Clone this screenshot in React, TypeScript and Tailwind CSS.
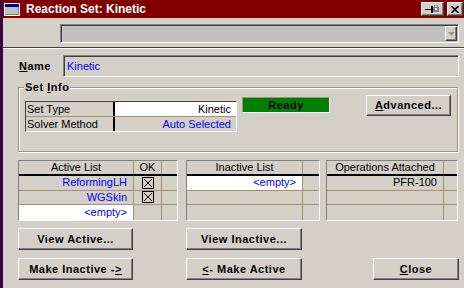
import type { ReactNode } from 'react';

const raised =
  'border border-t-white border-l-white border-b-[#404040] border-r-[#404040] shadow-[inset_-1px_-1px_0_#808080] bg-[#d4d0c8]';
const sunken =
  'border border-t-[#808080] border-l-[#808080] border-b-white border-r-white shadow-[inset_1px_1px_0_#404040]';

function Btn({ children, className }: { children: ReactNode; className: string }) {
  return (
    <div className={`${raised} ${className} flex items-center justify-center font-bold tracking-[0.5px] text-black`}>
      {children}
    </div>
  );
}

function Check() {
  return (
    <svg width="12" height="12" viewBox="0 0 12 12" className="block">
      <rect x="0.5" y="0.5" width="11" height="11" fill="none" stroke="#000" />
      <path d="M2 2L10 10M10 2L2 10" stroke="#000" strokeWidth="1" />
    </svg>
  );
}

// one grid row inside a list panel
function Row({
  cols,
  cells,
  white,
  last,
}: {
  cols: number[];
  cells: ReactNode[];
  white?: boolean;
  last?: boolean;
}) {
  return (
    <div className={`flex h-[15px] ${last ? '' : 'border-b border-[#a39374]'}`}>
      {cols.map((w, i) => (
        <div
          key={i}
          style={{ width: w }}
          className={`flex items-center ${i === 0 ? 'justify-end pr-[6px]' : 'justify-center'} ${
            i < cols.length - 1 ? 'border-r border-[#a39374]' : ''
          } ${white && i === 0 ? 'bg-white' : ''}`}
        >
          {cells[i]}
        </div>
      ))}
    </div>
  );
}

function Panel({
  width,
  cols,
  headers,
  rows,
  whiteRows,
}: {
  width: number;
  cols: number[];
  headers: ReactNode[];
  rows: ReactNode[][];
  whiteRows: number[];
}) {
  return (
    <div
      style={{ width }}
      className="h-[61px] border border-t-[#808080] border-l-[#808080] border-b-white border-r-white flex flex-col"
    >
      <div className="flex h-[13px]">
        {cols.map((w, i) => (
          <div
            key={i}
            style={{ width: w }}
            className={`flex items-center justify-center leading-none ${
              i < cols.length - 1 ? 'border-r border-[#a39374]' : ''
            }`}
          >
            {headers[i]}
          </div>
        ))}
      </div>
      <div className="h-[2px] bg-black" />
      {rows.map((r, i) => (
        <Row key={i} cols={cols} cells={r} white={whiteRows.includes(i)} last={i === rows.length - 1} />
      ))}
    </div>
  );
}

export default function App() {
  const blue = 'text-[#0000ff]';
  return (
    <div className="w-[464px] h-[288px] flex bg-[#d4d0c8] overflow-hidden text-[11px] leading-none text-black font-['Liberation_Sans',Arial,sans-serif]">
      {/* window edge */}
      <div className="w-[3px] bg-[#3c003c] shrink-0" />

      <div className="flex-1 flex flex-col">
        {/* Title bar */}
        <div className="h-[18px] bg-[#800000] flex items-center">
          <div className="ml-[1px] w-[16px] h-[13px] border border-white bg-[#c0c0c0] flex flex-col">
            <div className="h-[3px] bg-[#0000a8]" />
            <div className="flex-1 border-r border-b border-[#808080]" />
          </div>
          <span className="ml-[6px] text-white font-bold text-[12px]">Reaction Set: Kinetic</span>
          <div className="flex-1" />
          <div className={`${raised} w-[23px] h-[14px] flex items-center justify-center`}>
            <svg width="15" height="8" viewBox="0 0 15 8">
              <path d="M0 4.5H6" stroke="#000" />
              <rect x="6" y="1" width="2" height="7" fill="#000" />
              <rect x="8" y="2" width="6" height="5" fill="#808080" />
              <rect x="9" y="0" width="1" height="2" fill="#808080" />
              <rect x="12" y="0" width="1" height="2" fill="#808080" />
              <rect x="10" y="3" width="2" height="2" fill="#fff" />
            </svg>
          </div>
          <div className={`${raised} ml-[3px] mr-[1px] w-[16px] h-[14px] flex items-center justify-center`}>
            <svg width="8" height="7" viewBox="0 0 8 7">
              <path d="M0.5 0L7.5 7M7.5 0L0.5 7" stroke="#000" strokeWidth="1.6" />
            </svg>
          </div>
        </div>

        {/* Combo */}
        <div className={`${sunken} mt-[6px] ml-[57px] w-[399px] h-[19px] bg-[#c0c0c0] flex justify-end items-center pr-[1px]`}>
          <div className={`${raised} w-[12px] h-[15px] flex items-center justify-center`}>
            <svg width="7" height="4" viewBox="0 0 7 4">
              <path d="M0 0H7L3.5 4Z" fill="#a39374" />
            </svg>
          </div>
        </div>

        {/* Separator */}
        <div className="mt-[4px] h-[1px] bg-[#404040]" />
        <div className="h-[1px] bg-white" />

        {/* Name */}
        <div className="mt-[6px] flex items-center h-[22px]">
          <span className="pl-[16px] w-[60px] font-bold tracking-[0.5px]">
            <span className="underline">N</span>ame
          </span>
          <div className={`${sunken} w-[396px] h-[22px] flex items-center pl-[3px] ${blue}`}>Kinetic</div>
        </div>

        {/* Set Info group */}
        <div className="relative mt-[10px] ml-[15px] w-[440px] h-[65px] border border-[#9d9179] shadow-[inset_1px_1px_0_#fff,1px_1px_0_#fff] flex items-start pl-[6px]">
          <span className="absolute left-[5px] top-[-6px] px-[1px] bg-[#d4d0c8] font-bold tracking-[0.5px]">
            Set <span className="underline">I</span>nfo
          </span>

          <div className="mt-[13px] w-[212px] border border-t-[#404040] border-l-[#404040] border-b-white border-r-white flex flex-col">
            <div className="flex h-[15px] border-b border-[#a39374]">
              <div className="w-[87px] flex items-center pl-[1px]">Set Type</div>
              <div className="w-[2px] bg-black" />
              <div className="flex-1 bg-white flex items-center justify-end pr-[5px]">Kinetic</div>
            </div>
            <div className="flex h-[14px]">
              <div className="w-[87px] flex items-center pl-[1px]">Solver Method</div>
              <div className="w-[2px] bg-black" />
              <div className={`flex-1 flex items-center justify-end pr-[5px] ${blue}`}>Auto Selected</div>
            </div>
          </div>

          <div className="mt-[9px] ml-[5px] w-[88px] h-[16px] bg-[#008000] border border-t-[#a39374] border-l-[#a39374] border-b-white border-r-white flex items-center justify-center font-bold tracking-[0.5px]">
            Ready
          </div>

          <Btn className="mt-[7px] ml-[36px] w-[85px] h-[21px]">
            <span>
              <span className="underline">A</span>dvanced...
            </span>
          </Btn>
        </div>

        {/* Lists */}
        <div className="mt-[8px] ml-[15px] flex">
          <Panel
            width={160}
            cols={[115, 28, 15]}
            headers={['Active List', 'OK', '']}
            rows={[
              [<span className={blue}>ReformingLH</span>, <Check />, ''],
              [<span className={blue}>WGSkin</span>, <Check />, ''],
              [<span className={blue}>&lt;empty&gt;</span>, '', ''],
            ]}
            whiteRows={[2]}
          />
          <div className="ml-[8px]">
            <Panel
              width={134}
              cols={[116, 16]}
              headers={['Inactive List', '']}
              rows={[[<span className={blue}>&lt;empty&gt;</span>, ''], ['', ''], ['', '']]}
              whiteRows={[0]}
            />
          </div>
          <div className="ml-[6px]">
            <Panel
              width={132}
              cols={[117, 13]}
              headers={['Operations Attached', '']}
              rows={[['PFR-100', ''], ['', ''], ['', '']]}
              whiteRows={[]}
            />
          </div>
        </div>

        {/* Buttons */}
        <div className="mt-[7px] ml-[15px] flex">
          <Btn className="w-[115px] h-[22px]">View Active...</Btn>
          <Btn className="ml-[53px] w-[116px] h-[22px]">View Inactive...</Btn>
        </div>
        <div className="mt-[8px] ml-[15px] flex">
          <Btn className="w-[115px] h-[22px]">
            <span>
              Make Inactive -<span className="underline">&gt;</span>
            </span>
          </Btn>
          <Btn className="ml-[53px] w-[116px] h-[22px]">
            <span>
              <span className="underline">&lt;</span>- Make Active
            </span>
          </Btn>
          <Btn className="ml-[71px] w-[86px] h-[22px]">
            <span>
              <span className="underline">C</span>lose
            </span>
          </Btn>
        </div>
      </div>
    </div>
  );
}
